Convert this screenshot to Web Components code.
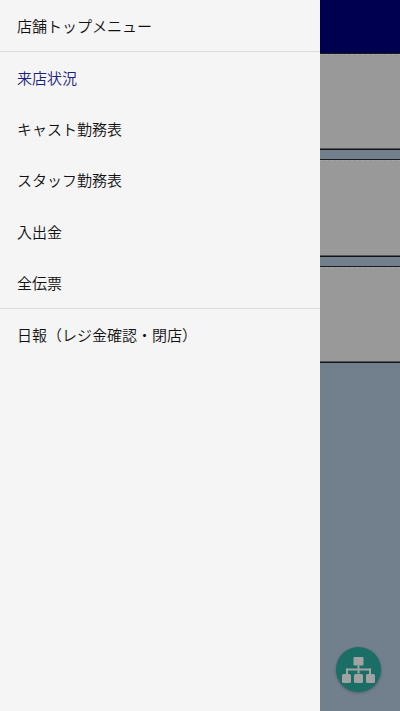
<!DOCTYPE html>
<html lang="ja">
<head>
<meta charset="utf-8">
<title>店舗トップメニュー</title>
<style>
  html, body { margin: 0; padding: 0; height: 100%; }
  body { font-family: Roboto, "Noto Sans CJK JP", sans-serif; overflow: hidden; }
</style>
</head>
<body>
<shop-app>
  <side-drawer slot="drawer">
    <menu-item top>店舗トップメニュー</menu-item>
    <menu-divider></menu-divider>
    <menu-item active>来店状況</menu-item>
    <menu-item>キャスト勤務表</menu-item>
    <menu-item>スタッフ勤務表</menu-item>
    <menu-item>入出金</menu-item>
    <menu-item>全伝票</menu-item>
    <menu-divider></menu-divider>
    <menu-item>日報（レジ金確認・閉店）</menu-item>
  </side-drawer>
  <back-page slot="page">
    <back-card></back-card>
    <back-card></back-card>
    <back-card></back-card>
  </back-page>
</shop-app>
<script>
class ShopApp extends HTMLElement {
  constructor() {
    super();
    this.attachShadow({ mode: "open" });
    this.shadowRoot.innerHTML = /*html*/ `
      <style>
        :host { display: flex; width: 400px; height: 711px; position: relative; overflow: hidden; }
        ::slotted([slot="drawer"]) { flex: 0 0 320px; }
        ::slotted([slot="page"]) { flex: 1 1 0; }
      </style>
      <slot name="drawer"></slot>
      <slot name="page"></slot>
      <tree-fab></tree-fab>
    `;
  }
}

class SideDrawer extends HTMLElement {
  constructor() {
    super();
    this.attachShadow({ mode: "open" });
    this.shadowRoot.innerHTML = /*html*/ `
      <style>
        :host { display: flex; flex-direction: column; background: #f5f5f5; height: 100%; }
      </style>
      <slot></slot>
    `;
  }
}

class MenuItem extends HTMLElement {
  constructor() {
    super();
    this.attachShadow({ mode: "open" });
    this.shadowRoot.innerHTML = /*html*/ `
      <style>
        :host {
          display: flex;
          align-items: center;
          height: 51.2px;
          padding-left: 17px;
          font-size: 15px;
          font-weight: 350;
          color: #111111;
          white-space: nowrap;
          text-spacing-trim: space-all;
        }
        :host([top]) { height: 51px; }
        :host([active]) { color: #1a237e; }
      </style>
      <slot></slot>
    `;
  }
}

class MenuDivider extends HTMLElement {
  constructor() {
    super();
    this.attachShadow({ mode: "open" });
    this.shadowRoot.innerHTML = /*html*/ `
      <style>
        :host { display: block; height: 1px; background: #dcdcdc; }
      </style>
    `;
  }
}

class BackPage extends HTMLElement {
  constructor() {
    super();
    this.attachShadow({ mode: "open" });
    this.shadowRoot.innerHTML = /*html*/ `
      <style>
        :host { display: block; height: 100%; background: #72808e; }
        header { height: 53px; background: #000050; }
        .list { display: flex; flex-direction: column; gap: 9.2px; }
      </style>
      <header></header>
      <div class="list"><slot></slot></div>
    `;
  }
}

class BackCard extends HTMLElement {
  constructor() {
    super();
    this.attachShadow({ mode: "open" });
    this.shadowRoot.innerHTML = /*html*/ `
      <style>
        :host {
          display: block;
          box-sizing: border-box;
          height: 97.2px;
          background: #999999;
          border-top: 1px solid #1c1c1c;
          border-bottom: 1px solid #141414;
          box-shadow: inset 0 -1px #555555;
        }
        :host::before {
          content: "";
          display: block;
          border-top: 1px dashed #a4a4a4;
        }
      </style>
    `;
  }
}

class TreeFab extends HTMLElement {
  constructor() {
    super();
    this.attachShadow({ mode: "open" });
    this.shadowRoot.innerHTML = /*html*/ `
      <style>
        :host {
          position: absolute;
          right: 19px;
          bottom: 19px;
          width: 45px;
          height: 45px;
          border-radius: 50%;
          background: #1a6e66;
          box-shadow: 0 1px 3px rgba(0, 0, 0, 0.3);
          display: flex;
          align-items: center;
          justify-content: center;
        }
        svg { display: block; }
      </style>
      <svg width="33" height="26" viewBox="0 0 33 26" fill="#a2a2a2">
        <rect x="11.5" y="0" width="10" height="8.5" rx="1"/>
        <rect x="15.5" y="8.5" width="2" height="8"/>
        <rect x="4" y="11.5" width="25" height="2"/>
        <rect x="4" y="11.5" width="2" height="6"/>
        <rect x="27" y="11.5" width="2" height="6"/>
        <rect x="0" y="17" width="9" height="9" rx="1.5"/>
        <rect x="12" y="17" width="9" height="9" rx="1.5"/>
        <rect x="24" y="17" width="9" height="9" rx="1.5"/>
      </svg>
    `;
  }
}

customElements.define("shop-app", ShopApp);
customElements.define("side-drawer", SideDrawer);
customElements.define("menu-item", MenuItem);
customElements.define("menu-divider", MenuDivider);
customElements.define("back-page", BackPage);
customElements.define("back-card", BackCard);
customElements.define("tree-fab", TreeFab);
</script>
</body>
</html>
